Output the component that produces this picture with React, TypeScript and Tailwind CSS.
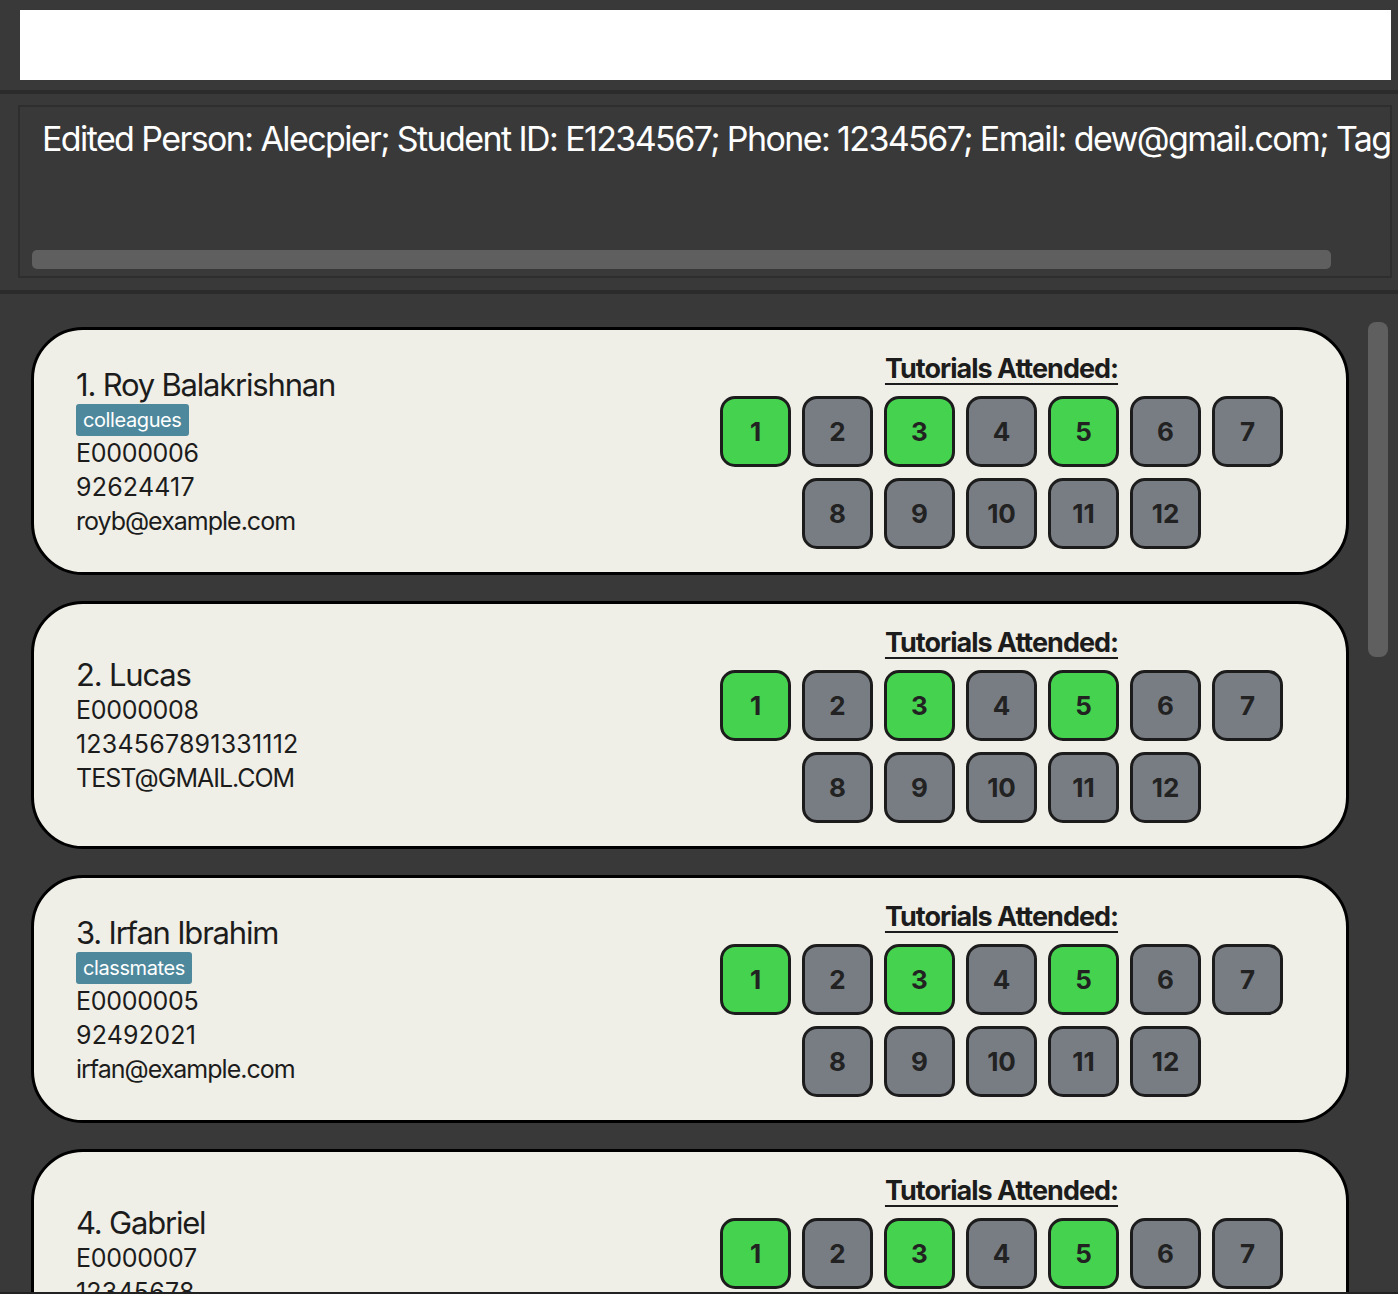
import React from 'react';

type Person = {
  name: string;
  tag?: string;
  id: string;
  phone: string;
  email: string;
};

const people: Person[] = [
  { name: 'Roy Balakrishnan', tag: 'colleagues', id: 'E0000006', phone: '92624417', email: 'royb@example.com' },
  { name: 'Lucas', id: 'E0000008', phone: '1234567891331112', email: 'TEST@GMAIL.COM' },
  { name: 'Irfan Ibrahim', tag: 'classmates', id: 'E0000005', phone: '92492021', email: 'irfan@example.com' },
  { name: 'Gabriel', id: 'E0000007', phone: '12345678', email: 'gabriel@example.com' },
];

const attended = [1, 3, 5];
const font = { fontFamily: 'Inter, "Noto Sans", sans-serif' };

const TutorialGrid = () => (
  <div className="flex flex-col items-center">
    <div className="text-[27px] font-bold leading-[32px] text-[#1c1c1c] underline underline-offset-[5px] decoration-[2px] tracking-[-1px]">
      Tutorials Attended:
    </div>
    <div className="mt-[11px] flex w-[563px] flex-wrap justify-center gap-[11px]">
      {Array.from({ length: 12 }, (_, i) => i + 1).map((n) => (
        <div
          key={n}
          className={`flex h-[71px] w-[71px] items-center justify-center rounded-[15px] border-[3px] border-[#1c1c1c] text-[26px] font-bold text-[#222] ${
            attended.includes(n) ? 'bg-[#45d24f]' : 'bg-[#787d84]'
          }`}
        >
          {n}
        </div>
      ))}
    </div>
  </div>
);

const PersonCard = ({ p, index }: { p: Person; index: number }) => (
  <div className="flex h-[248px] w-[1318px] shrink-0 items-start justify-between rounded-[52px] border-[3px] border-black bg-[#f0efe7] pl-[42px] pr-[63px] pt-[23px]">
    <div className="flex h-[196px] flex-col justify-center self-stretch pt-[2px] text-[#1c1c1c]">
      <div className="text-[31px] leading-[36px] tracking-[-1.2px]">
        {index + 1}. {p.name}
      </div>
      {p.tag && (
        <div className="mt-[1px] w-fit rounded-[3px] bg-[#4e889c] px-[7px] text-[20px] leading-[32px] tracking-[-0.4px] text-white">
          {p.tag}
        </div>
      )}
      <div className="text-[25px] leading-[34px] tracking-[-0.3px]">{p.id}</div>
      <div className="text-[25px] leading-[34px] tracking-[0.2px]">{p.phone}</div>
      <div className="text-[25px] leading-[34px] tracking-[-1px]">{p.email}</div>
    </div>
    <TutorialGrid />
  </div>
);

export default function App() {
  return (
    <div style={font} className="flex h-[1294px] w-[1398px] flex-col overflow-hidden bg-[#393939]">
      <div className="h-[90px] shrink-0 pl-[20px] pr-[7px] pt-[10px]">
        <div className="h-[70px] w-full bg-white" />
      </div>
      <div className="h-[4px] shrink-0 bg-[#2b2b2b]" />
      <div className="h-[196px] shrink-0 pl-[18px] pr-[6px] pt-[11px]">
        <div className="flex h-[173px] flex-col overflow-hidden border-2 border-[#2e2e2e] pb-[7px] pl-[12px] pr-[60px] pt-[11px]">
          <div className="whitespace-nowrap pl-[10px] text-[34px] leading-[41px] tracking-[-1.6px] text-white">
            Edited Person: Alecpier; Student ID: E1234567; Phone: 1234567; Email: dew@gmail.com; Tags: [friends]
          </div>
          <div className="mt-auto h-[19px] w-[1299px] rounded-[5px] bg-[#5f5f5f]" />
        </div>
      </div>
      <div className="h-[4px] shrink-0 bg-[#2b2b2b]" />
      <div className="flex min-h-0 flex-1 overflow-hidden border-b-2 border-[#222]">
        <div className="flex flex-col gap-[26px] pl-[31px] pt-[33px]">
          {people.map((p, i) => (
            <PersonCard key={p.name} p={p} index={i} />
          ))}
        </div>
        <div className="ml-[19px] mt-[28px] h-[335px] w-[20px] rounded-[8px] bg-[#5f5f5f]" />
      </div>
    </div>
  );
}
